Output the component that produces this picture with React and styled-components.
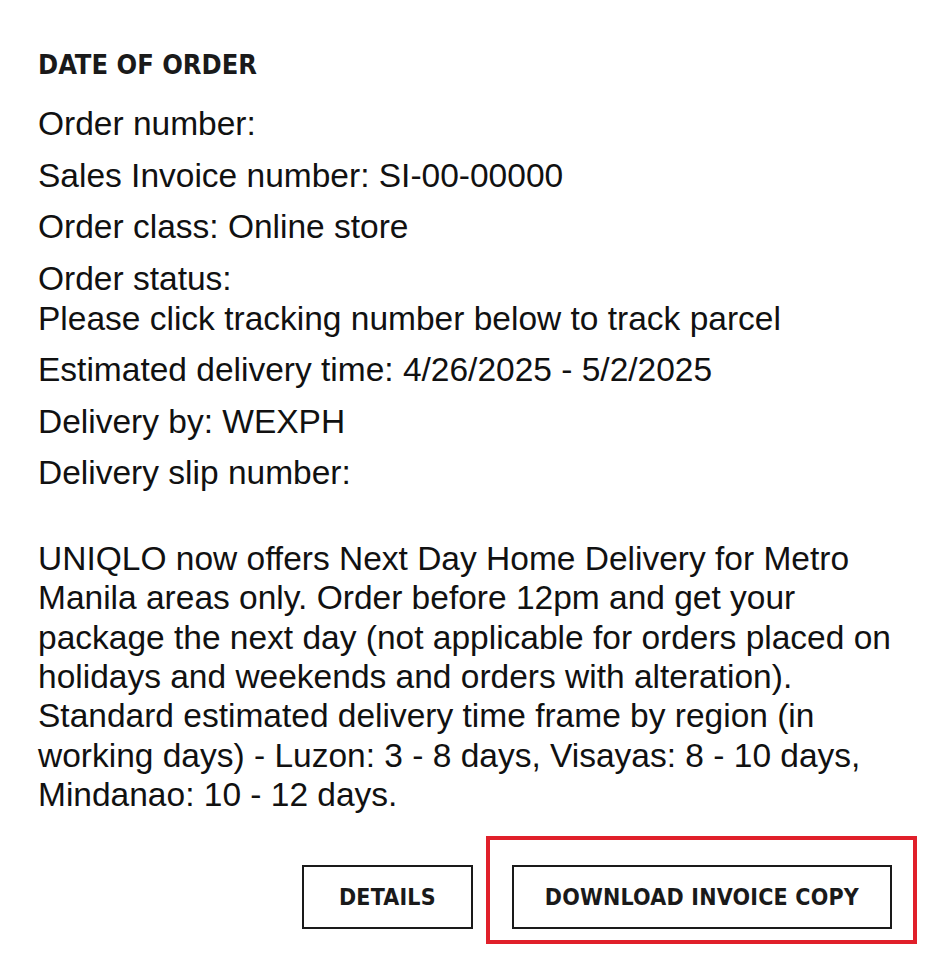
import React from "react";
import styled, { createGlobalStyle } from "styled-components";

const GlobalStyle = createGlobalStyle`
  html, body {
    margin: 0;
    padding: 0;
    background: #fff;
  }
  body {
    font-family: "Liberation Sans", Arial, sans-serif;
    color: #111;
  }
`;

const details = [
  "Order number:",
  "Sales Invoice number: SI-00-00000",
  "Order class: Online store",
  ["Order status:", "Please click tracking number below to track parcel"],
  "Estimated delivery time: 4/26/2025 - 5/2/2025",
  "Delivery by: WEXPH",
  "Delivery slip number:",
];

const App = () => {
  return (
    <Page>
      <GlobalStyle />
      <Title>DATE OF ORDER</Title>
      <InfoList>
        {details.map((d, i) =>
          Array.isArray(d) ? (
            <InfoItem key={i}>
              {d[0]}
              <br />
              {d[1]}
            </InfoItem>
          ) : (
            <InfoItem key={i}>{d}</InfoItem>
          )
        )}
      </InfoList>
      <Notice>
        UNIQLO now offers Next Day Home Delivery for Metro Manila areas only.
        Order before 12pm and get your package the next day (not applicable for
        orders placed on holidays and weekends and orders with alteration).
        Standard estimated delivery time frame by region (in working days) -
        Luzon: 3 - 8 days, Visayas: 8 - 10 days, Mindanao: 10 - 12 days.
      </Notice>
      <Actions>
        <Button>DETAILS</Button>
        <Highlight>
          <Button>DOWNLOAD INVOICE COPY</Button>
        </Highlight>
      </Actions>
    </Page>
  );
};

export default App;

const Page = styled.div`
  width: 930px;
  box-sizing: border-box;
  padding: 47px 13px 24px 38px;
`;
const Title = styled.h2`
  margin: 0;
  font-family: "Liberation Sans Narrow", "DejaVu Sans Condensed", sans-serif;
  font-weight: 700;
  font-size: 27px;
  line-height: 36px;
  letter-spacing: 0;
  color: #1a1a1a;
`;
const InfoList = styled.ul`
  list-style: none;
  margin: 21px 0 0;
  padding: 0;
  display: flex;
  flex-direction: column;
  gap: 11.5px;
`;
const InfoItem = styled.li`
  font-size: 33.5px;
  line-height: 40px;
`;
const Notice = styled.p`
  margin: 46px 0 0;
  font-size: 33.5px;
  line-height: 39.33px;
  max-width: 870px;
`;
const Actions = styled.div`
  margin-top: 22px;
  display: flex;
  justify-content: flex-end;
  align-items: flex-start;
  gap: 13px;
`;
const Highlight = styled.div`
  border: 4px solid #e0202a;
  padding: 25px 21px 11px 22px;
`;
const Button = styled.button`
  margin-top: 29px;
  height: 64px;
  padding: 0 35px;
  background: #fff;
  border: 2px solid #1a1a1a;
  font-family: "Liberation Sans Narrow", "DejaVu Sans Condensed", sans-serif;
  font-weight: 700;
  font-size: 23px;
  letter-spacing: 0.2px;
  color: #1a1a1a;
  cursor: pointer;
  ${Highlight} & {
    margin-top: 0;
    padding: 0 31px;
  }
`;
